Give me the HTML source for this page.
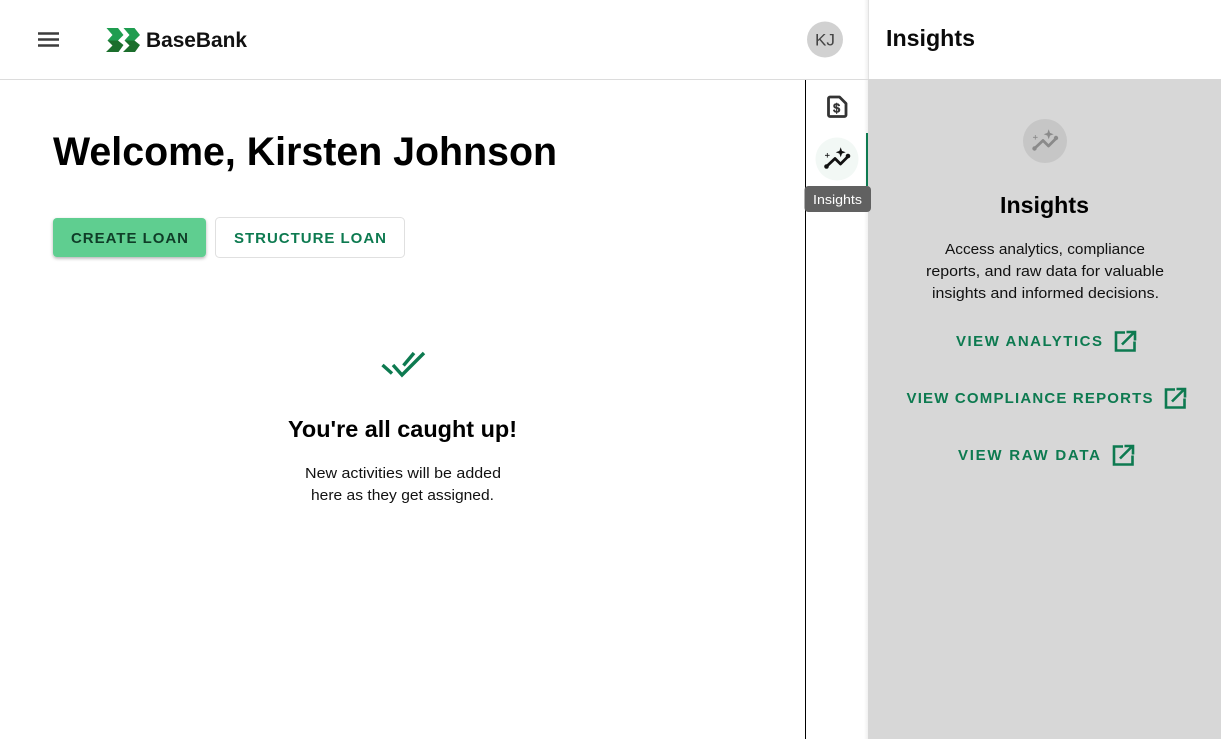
<!DOCTYPE html>
<html>
<head>
<meta charset="utf-8">
<style>
html,body{margin:0;padding:0;background:#fff;width:1221px;height:739px;overflow:hidden}
svg{display:block;position:absolute;left:0;top:0}
text{font-family:"Liberation Sans",sans-serif}
.p{font-size:15px;fill:#111}
.l{font-size:15px;font-weight:700;fill:#0d7a50}
</style>
</head>
<body>
<svg width="1221" height="739" viewBox="0 0 1221 739" xmlns="http://www.w3.org/2000/svg">
<defs>
<linearGradient id="sh" x1="0" x2="1" y1="0" y2="0"><stop offset="0" stop-color="#000" stop-opacity="0"/><stop offset="1" stop-color="#000" stop-opacity=".06"/></linearGradient>
<filter id="bs" x="-10%" y="-20%" width="120%" height="150%"><feDropShadow dx="0" dy="1.5" stdDeviation="1.5" flood-color="#000" flood-opacity=".3"/></filter>
</defs>
<rect width="1221" height="739" fill="#fff"/>
<!-- panel -->
<rect x="868" y="79" width="353" height="660" fill="#d7d7d7"/>
<rect x="864" y="0" width="4" height="739" fill="url(#sh)"/>
<rect x="868" y="0" width="1" height="79" fill="#e2e2e2"/>
<rect x="0" y="79" width="868" height="1" fill="#dcdcdc"/>
<rect x="805" y="80" width="1" height="659" fill="#000"/>
<!-- hamburger -->
<path d="M38 33.500h21M38 39.500h21M38 45.500h21" stroke="#3c3c3c" stroke-width="2.400" fill="none"/>
<!-- logo -->
<path d="M106.500 28h11.500l5.500 7-5.500 5.500h-10.500l5-5.500z" fill="#1f9d50"/>
<path d="M107.500 40.500h10.500l5.500 4.500-5 7h-12.500l6.500-6.500z" fill="#1b6e2c"/>
<path d="M123.500 28h11l5.500 7-5.500 5.500h-10l5-5.500z" fill="#1f9d50"/>
<path d="M124.500 40.500h10l5.500 4.500-5 7h-12l6.500-6.500z" fill="#1b6e2c"/>
<text x="146" y="47" font-size="21" font-weight="700" fill="#111" textLength="101" lengthAdjust="spacingAndGlyphs">BaseBank</text>
<!-- avatar -->
<circle cx="825" cy="39.500" r="18" fill="#d1d1d1"/>
<text x="815" y="45.500" font-size="17" fill="#444" textLength="20" lengthAdjust="spacingAndGlyphs">KJ</text>
<!-- panel title -->
<text x="886" y="46" font-size="23" font-weight="700" fill="#0a0a0a" textLength="89" lengthAdjust="spacingAndGlyphs">Insights</text>
<!-- doc icon -->
<path d="M830 97h9.500l6.500 6.500v11.500a1.500 1.500 0 0 1-1.500 1.500h-14.500a1.500 1.500 0 0 1-1.500-1.500v-16.500a1.500 1.500 0 0 1 1.500-1.500z" fill="none" stroke="#333" stroke-width="2.800" stroke-linejoin="round"/>
<text x="833" y="112.500" font-size="13" font-weight="700" fill="#333" stroke="#333" stroke-width=".4">$</text>
<!-- insights rail -->
<circle cx="837" cy="159" r="21.500" fill="#f2f8f5"/>
<path d="M826.500 166.500l8.500-8 5.500 5.500 7.500-7.500" fill="none" stroke="#111" stroke-width="2.800" stroke-linejoin="round"/>
<circle cx="826.500" cy="166.500" r="2.300" fill="#111"/>
<circle cx="848" cy="156" r="2.300" fill="#111"/>
<path d="M840.700 148.500l1 2.800 2.800 1-2.800 1-1 2.800-1-2.800-2.800-1 2.800-1zM827.300 153v4.600M825 155.300h4.600" fill="#111" stroke="#111" stroke-width=".8"/>
<rect x="866" y="133" width="2" height="53" fill="#0d7a50"/>
<!-- tooltip -->
<rect x="804.500" y="186" width="66.500" height="26" rx="4" fill="#616161"/>
<text x="813" y="204" font-size="13" fill="#fff" textLength="49" lengthAdjust="spacingAndGlyphs">Insights</text>
<!-- main -->
<text x="53" y="165" font-size="40" font-weight="700" fill="#000" textLength="504" lengthAdjust="spacingAndGlyphs">Welcome, Kirsten Johnson</text>
<rect x="53" y="218" width="153" height="39" rx="4" fill="#5fce90" filter="url(#bs)"/>
<text x="71" y="243" font-size="15" font-weight="700" fill="#0f3d28" textLength="117" lengthAdjust="spacing">CREATE LOAN</text>
<rect x="215.500" y="217.500" width="189" height="40" rx="4" fill="#fff" stroke="#e0e0e0"/>
<text x="234" y="243" font-size="15" font-weight="700" fill="#0d7a50" textLength="152" lengthAdjust="spacing">STRUCTURE LOAN</text>
<!-- double check -->
<path d="M382.500 365l9.500 8.500M393 365l9 10 22-22M403.500 365.500l10.500-12.500" fill="none" stroke="#0d7a50" stroke-width="3.400"/>
<text x="288" y="437" font-size="23" font-weight="700" fill="#000" textLength="229" lengthAdjust="spacingAndGlyphs">You're all caught up!</text>
<text x="305" y="478" class="p" textLength="196" lengthAdjust="spacingAndGlyphs">New activities will be added</text>
<text x="311" y="500" class="p" textLength="183" lengthAdjust="spacingAndGlyphs">here as they get assigned.</text>
<!-- panel body -->
<circle cx="1045" cy="141" r="22" fill="#c6c6c6"/>
<path d="M1034.500 148.500l8.500-8 5.500 5.500 7.500-7.500" fill="none" stroke="#8a8a8a" stroke-width="2.800" stroke-linejoin="round"/>
<circle cx="1034.500" cy="148.500" r="2.200" fill="#8a8a8a"/>
<circle cx="1056" cy="138" r="2.200" fill="#8a8a8a"/>
<path d="M1048.700 130.500l1 2.800 2.800 1-2.800 1-1 2.800-1-2.800-2.800-1 2.800-1zM1035.300 135v4.600M1033 137.300h4.600" fill="#8a8a8a" stroke="#8a8a8a" stroke-width=".8"/>
<text x="1000" y="213" font-size="23" font-weight="700" fill="#000" textLength="89" lengthAdjust="spacingAndGlyphs">Insights</text>
<text x="945" y="254" class="p" textLength="200" lengthAdjust="spacingAndGlyphs">Access analytics, compliance</text>
<text x="926" y="276" class="p" textLength="238" lengthAdjust="spacingAndGlyphs">reports, and raw data for valuable</text>
<text x="932" y="298" class="p" textLength="227" lengthAdjust="spacingAndGlyphs">insights and informed decisions.</text>
<text x="956" y="346" class="l" textLength="146" lengthAdjust="spacing">VIEW ANALYTICS</text>
<text x="906.500" y="403" class="l" textLength="246" lengthAdjust="spacing">VIEW COMPLIANCE REPORTS</text>
<text x="958" y="460" class="l" textLength="142" lengthAdjust="spacing">VIEW RAW DATA</text>
<g fill="none" stroke="#0d7a50" stroke-width="2.600">
<path d="M1125 332.500h-9v18h18.500v-9M1122 344.500l12-12M1126.500 332h8.500v8.500"/>
<path d="M1175 389.500h-9v18h18.500v-9M1172 401.500l12-12M1176.500 389h8.500v8.500"/>
<path d="M1123 446.500h-9v18h18.500v-9M1120 458.500l12-12M1124.500 446h8.500v8.500"/>
</g>
</svg>
</body>
</html>
